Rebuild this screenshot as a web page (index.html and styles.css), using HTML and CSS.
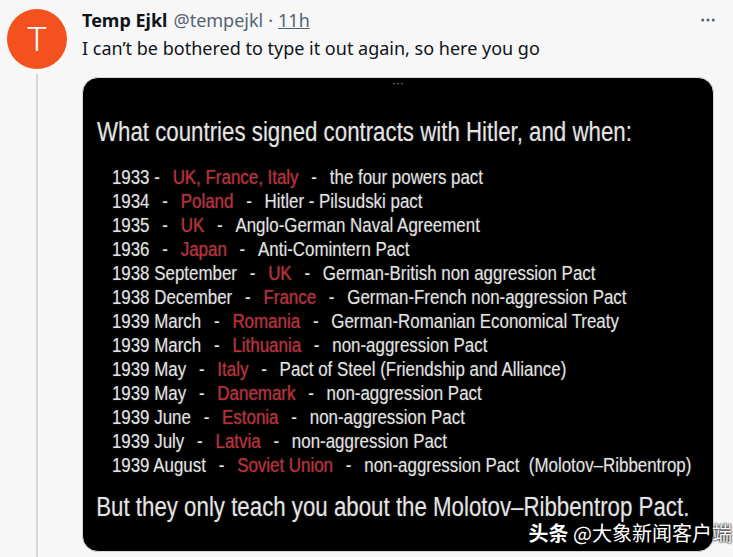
FILE: index.html
```html
<!DOCTYPE html>
<html lang="en">
<head>
    <meta charset="UTF-8">
    <title>Temp Ejkl on Twitter</title>
    <link rel="stylesheet" href="styles.css">
</head>
<body>

<div class="tweet">
    <div class="side">
        <div class="avatar">T</div>
        <div class="thread"></div>
    </div>

    <div class="main">
        <div class="head">
            <span class="name">Temp Ejkl</span>
            <span class="handle">@tempejkl</span>
            <span class="dot">·</span>
            <a class="time" href="#">11h</a>
            <span class="more">
                <svg width="18" height="18" viewBox="0 0 24 24"><circle cx="5" cy="12" r="2"/><circle cx="12" cy="12" r="2"/><circle cx="19" cy="12" r="2"/></svg>
            </span>
        </div>
        <p class="text">I can’t be bothered to type it out again, so here you go</p>

        <div class="media">
            <div class="card">
                <div class="grip">···</div>
                <div class="slide">
                    <h1 class="title">What countries signed contracts with Hitler, and when:</h1>
                    <div class="rows">
                        <div class="row"><span>1933 -</span><span class="red">UK, France, Italy</span><span>-</span><span>the four powers pact</span></div>
                        <div class="row"><span>1934</span><span>-</span><span class="red">Poland</span><span>-</span><span>Hitler - Pilsudski pact</span></div>
                        <div class="row"><span>1935</span><span>-</span><span class="red">UK</span><span>-</span><span>Anglo-German Naval Agreement</span></div>
                        <div class="row"><span>1936</span><span>-</span><span class="red">Japan</span><span>-</span><span>Anti-Comintern Pact</span></div>
                        <div class="row"><span>1938 September</span><span>-</span><span class="red">UK</span><span>-</span><span>German-British non aggression Pact</span></div>
                        <div class="row"><span>1938 December</span><span>-</span><span class="red">France</span><span>-</span><span>German-French non-aggression Pact</span></div>
                        <div class="row"><span>1939 March</span><span>-</span><span class="red">Romania</span><span>-</span><span>German-Romanian Economical Treaty</span></div>
                        <div class="row"><span>1939 March</span><span>-</span><span class="red">Lithuania</span><span>-</span><span>non-aggression Pact</span></div>
                        <div class="row"><span>1939 May</span><span>-</span><span class="red">Italy</span><span>-</span><span>Pact of Steel (Friendship and Alliance)</span></div>
                        <div class="row"><span>1939 May</span><span>-</span><span class="red">Danemark</span><span>-</span><span>non-aggression Pact</span></div>
                        <div class="row"><span>1939 June</span><span>-</span><span class="red">Estonia</span><span>-</span><span>non-aggression Pact</span></div>
                        <div class="row"><span>1939 July</span><span>-</span><span class="red">Latvia</span><span>-</span><span>non-aggression Pact</span></div>
                        <div class="row"><span>1939 August</span><span>-</span><span class="red">Soviet Union</span><span>-</span><span>non-aggression Pact&nbsp; (Molotov–Ribbentrop)</span></div>
                    </div>
                    <p class="footer">But they only teach you about the Molotov–Ribbentrop Pact.</p>
                </div>
            </div>
            <div class="mark"><b>头条</b> @大象新闻客户端</div>
        </div>
    </div>
</div>

</body>
</html>
```

FILE: styles.css
```css
body {
    margin: 0;
    background-color: #f7f7f7;
    font-family: "Noto Sans", Arial, sans-serif;
    color: #0f1419;
    width: 733px;
    height: 557px;
    overflow: hidden;
}
.tweet {
    display: flex;
    padding: 9px 0 0 7px;
}
.side {
    width: 60px;
    display: flex;
    flex-direction: column;
    align-items: center;
    margin-right: 15px;
}
.avatar {
    width: 60px;
    height: 60px;
    border-radius: 50%;
    background-color: #f4511e;
    color: #fff;
    font-family: "Roboto", sans-serif;
    font-weight: 300;
    font-size: 34px;
    line-height: 60px;
    text-align: center;
}
.thread {
    width: 2px;
    height: 500px;
    margin-top: 5px;
    background-color: #cfd9de;
}
.main {
    width: 632px;
}
.head {
    display: flex;
    align-items: center;
    font-size: 18px;
    height: 24px;
    margin-top: -1px;
}
.name {
    font-weight: 700;
    margin-right: 6px;
}
.handle, .dot, .time {
    color: #536471;
}
.dot {
    margin: 0 5px;
}
.time {
    text-decoration: underline;
}
.more {
    margin-left: auto;
    margin-right: -3px;
    fill: #536471;
    display: flex;
}
.text {
    margin: 4px 0 0 0;
    font-size: 18px;
    line-height: 24px;
}
.media {
    position: relative;
    margin-top: 17px;
}
.card {
    height: 473px;
    background-color: #000;
    border: 1px solid #cfd9de;
    border-radius: 16px;
    overflow: hidden;
}
.grip {
    color: #8a8a8a;
    text-align: center;
    font-size: 12px;
    line-height: 10px;
    height: 10px;
    font-family: "Liberation Sans", sans-serif;
}
.slide {
    font-family: "Liberation Sans", Arial, sans-serif;
    color: #e4e4e4;
    transform: scaleX(0.825);
    transform-origin: left top;
    text-shadow: 0 0 2px rgba(255, 255, 255, 0.25);
}
.title {
    margin: 27px 0 0 17px;
    font-weight: 400;
    font-size: 27px;
    line-height: 34px;
    white-space: nowrap;
}
.rows {
    margin: 16px 0 0 35px;
}
.row {
    display: flex;
    gap: 15.5px;
    font-size: 20.5px;
    line-height: 24px;
    white-space: nowrap;
}
.red {
    color: #c42b36;
}
.footer {
    margin: 16px 0 0 16px;
    font-size: 27px;
    line-height: 28px;
    white-space: nowrap;
}
.mark {
    position: absolute;
    right: -18px;
    bottom: 9px;
    font-family: "Noto Sans CJK SC", sans-serif;
    font-size: 20px;
    line-height: 20px;
    color: #fff;
    white-space: nowrap;
    text-shadow: 0 0 2px #000, 0 0 2px #000;
}
```
